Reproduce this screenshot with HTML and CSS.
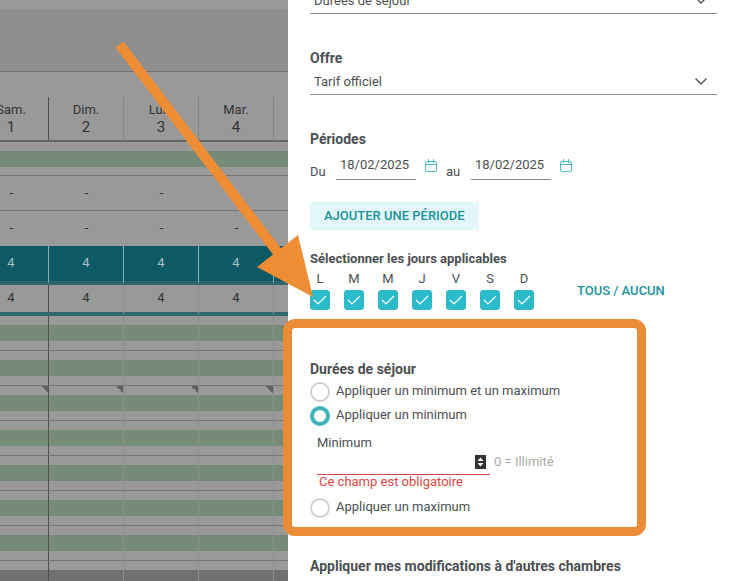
FILE: index.html
```html
<!DOCTYPE html>
<html lang="fr">
<head>
    <meta charset="UTF-8">
    <meta name="viewport" content="width=device-width, initial-scale=1.0">
    <title>Durées de séjour</title>
    <link rel="stylesheet" href="styles.css">
</head>
<body>
<div class="page">

    <!-- planning -->
    <div class="planning">
        <div class="toolbar"></div>
        <table class="calendar">
            <thead>
                <tr>
                    <th class="month-end">Sam.<span>1</span></th>
                    <th>Dim.<span>2</span></th>
                    <th>Lun.<span>3</span></th>
                    <th>Mar.<span>4</span></th>
                    <th></th>
                </tr>
            </thead>
            <tbody>
                <tr class="bars first"><td><div class="bar"></div></td><td><div class="bar"></div></td><td><div class="bar"></div></td><td><div class="bar"></div></td><td><div class="bar"></div></td></tr>
                <tr class="empty"><td>-</td><td>-</td><td>-</td><td></td><td></td></tr>
                <tr class="empty"><td>-</td><td>-</td><td>-</td><td>-</td><td></td></tr>
                <tr class="total"><td>4</td><td>4</td><td>4</td><td>4</td><td></td></tr>
                <tr class="stock"><td class="month-end">4</td><td>4</td><td>4</td><td>4</td><td></td></tr>
                <tr class="bars"><td class="month-end"><div class="bar"></div></td><td><div class="bar"></div></td><td><div class="bar"></div></td><td><div class="bar"></div></td><td><div class="bar"></div></td></tr>
                <tr class="bars"><td class="month-end"><div class="bar"></div></td><td><div class="bar"></div></td><td><div class="bar"></div></td><td><div class="bar"></div></td><td><div class="bar"></div></td></tr>
                <tr class="bars noted"><td class="month-end"><div class="bar"></div></td><td><div class="bar"></div></td><td><div class="bar"></div></td><td><div class="bar"></div></td><td><div class="bar"></div></td></tr>
                <tr class="bars"><td class="month-end"><div class="bar"></div></td><td><div class="bar"></div></td><td><div class="bar"></div></td><td><div class="bar"></div></td><td><div class="bar"></div></td></tr>
                <tr class="bars"><td class="month-end"><div class="bar"></div></td><td><div class="bar"></div></td><td><div class="bar"></div></td><td><div class="bar"></div></td><td><div class="bar"></div></td></tr>
                <tr class="bars"><td class="month-end"><div class="bar"></div></td><td><div class="bar"></div></td><td><div class="bar"></div></td><td><div class="bar"></div></td><td><div class="bar"></div></td></tr>
                <tr class="bars"><td class="month-end"><div class="bar"></div></td><td><div class="bar"></div></td><td><div class="bar"></div></td><td><div class="bar"></div></td><td><div class="bar"></div></td></tr>
                <tr class="bars closed"><td class="month-end"><div class="bar"></div></td><td><div class="bar"></div></td><td><div class="bar"></div></td><td><div class="bar"></div></td><td><div class="bar"></div></td></tr>
            </tbody>
        </table>
    </div>

    <!-- side panel -->
    <form class="panel">
        <select class="select" aria-label="Type de modification">
            <option>Durées de séjour</option>
        </select>

        <section class="block offer">
            <label class="title" for="offer">Offre</label>
            <select class="select" id="offer">
                <option>Tarif officiel</option>
            </select>
        </section>

        <section class="block">
            <h2 class="title">Périodes</h2>
            <div class="dates">
                <label for="from">Du</label>
                <input type="text" id="from" value="18/02/2025">
                <button type="button" class="date-btn" aria-label="Choisir la date de début">
                    <svg width="12" height="13" viewBox="0 0 12 13" fill="none" stroke="#4dbcc4"><rect x="0.5" y="2.5" width="11" height="10" rx="1.5"/><path d="M0.5 5.5h11M3.5 0v4M8.5 0v4"/></svg>
                </button>
                <label for="to">au</label>
                <input type="text" id="to" value="18/02/2025">
                <button type="button" class="date-btn" aria-label="Choisir la date de fin">
                    <svg width="12" height="13" viewBox="0 0 12 13" fill="none" stroke="#4dbcc4"><rect x="0.5" y="2.5" width="11" height="10" rx="1.5"/><path d="M0.5 5.5h11M3.5 0v4M8.5 0v4"/></svg>
                </button>
            </div>
            <button type="button" class="add-btn">AJOUTER UNE PÉRIODE</button>
        </section>

        <section class="block days-block">
            <h2 class="title small">Sélectionner les jours applicables</h2>
            <div class="days">
                <label class="day">L<input type="checkbox" checked></label>
                <label class="day">M<input type="checkbox" checked></label>
                <label class="day">M<input type="checkbox" checked></label>
                <label class="day">J<input type="checkbox" checked></label>
                <label class="day">V<input type="checkbox" checked></label>
                <label class="day">S<input type="checkbox" checked></label>
                <label class="day">D<input type="checkbox" checked></label>
                <button type="button" class="all-btn">TOUS / AUCUN</button>
            </div>
        </section>

        <section class="block stay">
            <h2 class="title">Durées de séjour</h2>
            <label class="choice"><input type="radio" name="stay">Appliquer un minimum et un maximum</label>
            <label class="choice"><input type="radio" name="stay" checked>Appliquer un minimum</label>
            <div class="minimum">
                <label for="min">Minimum</label>
                <div class="min-row">
                    <div class="number">
                        <input type="number" id="min">
                        <svg width="11" height="14" viewBox="0 0 11 14"><rect width="11" height="14" fill="#333"/><path d="M5.5 2.5L8.5 6h-6zM5.5 11.5L8.5 8h-6z" fill="#fff"/></svg>
                    </div>
                    <span class="hint">0 = Illimité</span>
                </div>
                <p class="error">Ce champ est obligatoire</p>
            </div>
            <label class="choice"><input type="radio" name="stay">Appliquer un maximum</label>
            <div class="highlight"></div>
        </section>

        <h2 class="title rooms">Appliquer mes modifications à d'autres chambres</h2>
    </form>

    <!-- arrow over the page -->
    <svg class="arrow" width="320" height="300" viewBox="0 0 320 300">
        <path d="M119.500 44.500L285 262" stroke="#ee8d34" stroke-width="10"/>
        <path d="M298 235L313 297L257 267z" fill="#ee8d34"/>
    </svg>
</div>
</body>
</html>
```
FILE: styles.css
```css
*{
    margin: 0;
    padding: 0;
    box-sizing: border-box;
}
body{
    font-family: Roboto, "Liberation Sans", sans-serif;
    font-size: 13px;
    line-height: 16px;
    color: #4b4f53;
    background: white;
}
input,select,button{
    font: inherit;
    color: inherit;
    border: none;
    border-radius: 0;
    background: none;
}
.page{
    position: relative;
    display: grid;
    grid-template-columns: 288fr 449fr;
    height: 100vh;
    overflow: hidden;
}

/* planning */
.planning{
    background: #999;
    overflow: hidden;
    padding-top: 9px;
}
.toolbar{
    height: 63px;
    background: #8f8f8f;
    border-bottom: 1px solid #747474;
    margin-bottom: 25px;
}
.calendar{
    table-layout: fixed;
    width: 375px;
    margin-left: -26px;
    border-collapse: separate;
    border-spacing: 0;
    text-align: center;
    color: #333;
}
.calendar th{
    height: 45px;
    padding-top: 5px;
    font-weight: 400;
    vertical-align: top;
    border-right: 1px solid #858585;
    border-bottom: 2px solid #666;
}
.calendar th span{
    display: block;
    font-size: 15px;
    line-height: 18px;
}
.calendar td{
    border-right: 1px solid #8f8f8f;
}
.calendar .month-end{
    border-right-color: #505050;
}
.bars td{
    height: 35px;
    padding-top: 9px;
    vertical-align: top;
    border-bottom: 1px solid #777;
}
.bar{
    height: 16px;
    background: #768c78;
}
.calendar .first td{
    height: 34px;
    border-right: none;
}
.calendar .empty td{
    height: 35px;
    border-right: none;
    border-bottom: 1px solid #777;
}
.calendar .empty + .empty td{
    border-bottom-color: #999;
}
.calendar .total td{
    height: 39px;
    padding-bottom: 2px;
    color: #a9bfc2;
    background: #0d5966;
    border-right-color: #8fabae;
    border-bottom: 4px solid #2d676d;
}
.calendar .stock td{
    height: 31px;
    padding-bottom: 2px;
    border-bottom: 4px solid #2f696d;
}
.noted td{
    background: linear-gradient(to bottom left, #606060 50%, transparent 50%) top right / 7px 7px no-repeat;
}
.closed .bar{
    height: 26px;
    background: #707070;
}

/* side panel */
.panel{
    background: white;
    padding: 0 20px 0 22px;
}
.title{
    display: block;
    font-size: 14px;
    font-weight: 700;
}
.small{
    font-size: 13px;
}
.block{
    margin-top: 36px;
}
.select{
    display: block;
    width: 100%;
    height: 26px;
    padding-left: 4px;
    appearance: none;
    border-bottom: 1px solid #8c8c8c;
    background: url("data:image/svg+xml,%3Csvg xmlns='http://www.w3.org/2000/svg' width='12' height='7' fill='none' stroke='%23555' stroke-width='1.4'%3E%3Cpath d='M0.500 0.500L6 6L11.500 0.500'/%3E%3C/svg%3E") right 10px center no-repeat;
}
.panel > .select{
    margin-top: -12px;
}
.offer .select{
    margin-top: 3px;
}
.dates{
    display: flex;
    align-items: flex-end;
    margin-top: 7px;
}
.dates label{
    width: 26px;
}
.dates label + input{
    width: 80px;
    height: 26px;
    padding: 0 4px 5px;
    border-bottom: 1px solid #8c8c8c;
}
.date-btn{
    display: flex;
    padding: 0 9px 8px;
}
.date-btn + label{
    width: 25px;
}
.add-btn{
    height: 28px;
    margin-top: 22px;
    padding: 0 14px;
    font-weight: 500;
    color: #1a929b;
    background: #e3f6fa;
    border-radius: 3px;
}
.days-block{
    margin-top: 21px;
}
.days{
    display: flex;
    gap: 14px;
    margin-top: 4px;
}
.day{
    display: flex;
    flex-direction: column;
    align-items: center;
    gap: 3px;
}
.day input{
    width: 20px;
    height: 20px;
    appearance: none;
    border: 1px solid #35b5c6;
    border-radius: 3px;
}
.day input:checked{
    background: #2bbccb url("data:image/svg+xml,%3Csvg xmlns='http://www.w3.org/2000/svg' width='14' height='10' fill='none' stroke='white' stroke-width='1.2'%3E%3Cpath d='M1 5L5 9L13 1'/%3E%3C/svg%3E") center no-repeat;
}
.all-btn{
    margin-left: 29px;
    font-weight: 500;
    color: #1a929b;
}

/* length of stay */
.stay{
    position: relative;
    margin-top: 51px;
}
.choice{
    display: flex;
    align-items: flex-start;
    gap: 6px;
    height: 24px;
    line-height: 18px;
    padding-top: 2px;
}
.title + .choice{
    margin-top: 3px;
}
.choice input{
    flex: none;
    width: 20px;
    height: 20px;
    appearance: none;
    border: 2px solid #d2d2d2;
    border-radius: 50%;
}
.choice input:checked{
    border: 4px solid #3db5b7;
}
.minimum{
    padding: 7px 0 7px 7px;
}
.min-row{
    display: flex;
    align-items: center;
    gap: 4px;
}
.number{
    display: flex;
    align-items: center;
    width: 173px;
    height: 24px;
    padding: 0 4px 2px 0;
    border-bottom: 1px solid #cf4a48;
}
.number input{
    flex: 1;
    min-width: 0;
    appearance: textfield;
}
.hint{
    padding-bottom: 2px;
    color: #aaa;
}
.error{
    padding-left: 2px;
    line-height: 14px;
    color: #d9463f;
}
/* frame drawn over the panel edge */
.highlight{
    position: absolute;
    top: -42px;
    bottom: -16px;
    left: -27px;
    width: 363px;
    border: 9px solid #ea8c36;
    border-radius: 12px;
}
.rooms{
    margin-top: 38px;
}
.arrow{
    position: absolute;
    top: 0;
    left: 0;
    pointer-events: none;
}
```
